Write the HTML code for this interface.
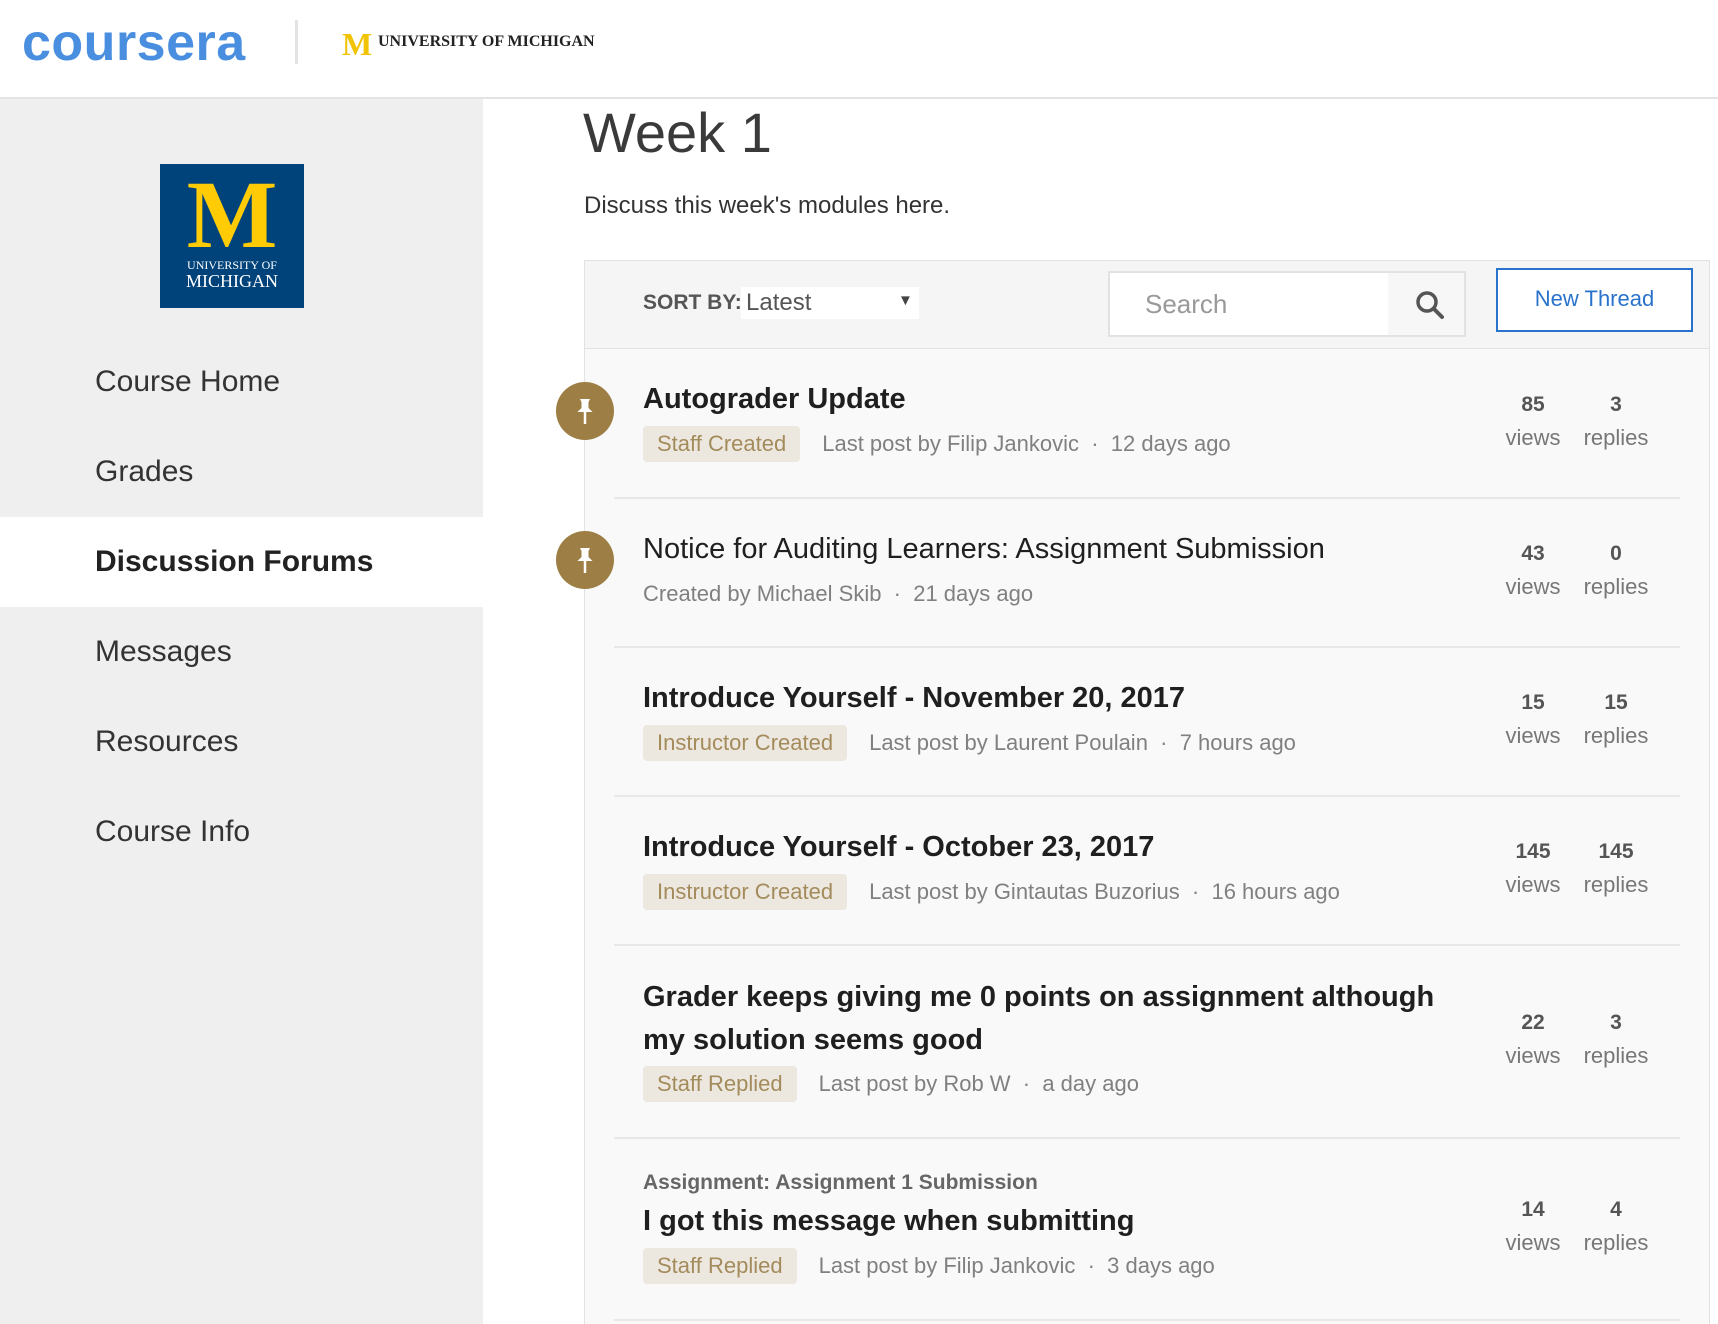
<!DOCTYPE html>
<html style="overflow:hidden;height:1324px"><head><meta charset="utf-8"><style>
*{margin:0;padding:0;box-sizing:border-box}
body{width:1718px;height:1324px;overflow:hidden;background:#fff;font-family:"Liberation Sans",sans-serif;position:relative;color:#1f1f1f}
.a{position:absolute;white-space:nowrap}
.hdr{position:absolute;left:0;top:0;width:1718px;height:99px;background:#fff;border-bottom:2px solid #e3e3e3}
.side{position:absolute;left:0;top:99px;width:483px;height:1225px;background:#efefef}
.nav{position:absolute;left:95px;font-size:30px;color:#333;line-height:40px}
.panel{position:absolute;left:584px;top:260px;width:1126px;height:1064px;background:#f9f9f9;border:1px solid #e2e2e2;border-bottom:none}
.tool{position:absolute;left:584px;top:260px;width:1126px;height:89px;background:#f5f5f5;border:1px solid #e2e2e2}
.sep{position:absolute;left:614px;width:1066px;height:2px;background:#e8e8e8}
.pin{position:absolute;width:58px;height:58px;border-radius:50%;background:#9d7e44}
.t{position:absolute;left:643px;font-size:29px;font-weight:bold;color:#1f1f1f}
.tn{font-weight:normal}
.m{position:absolute;left:643px;font-size:22px;color:#808080;line-height:36px}
.b{display:inline-block;background:#ede8df;color:#a48b5c;padding:0 14px;border-radius:4px;margin-right:22px;line-height:36px}
.st{position:absolute;text-align:center;width:90px;font-size:22px;color:#777;line-height:33px}
.st b{color:#555;font-size:21px}
</style></head><body>
<div class="hdr"></div>
<div class="a" style="left:22px;top:13px;font-size:52px;font-weight:bold;color:#4a8ee0;letter-spacing:0.5px">coursera</div>
<div class="a" style="left:295px;top:20px;width:3px;height:44px;background:#e3e3e3"></div>
<div class="a" style="left:342px;top:26px;font-size:32px;font-weight:900;color:#f2c300;font-family:'Liberation Serif',serif">M</div>
<div class="a" style="left:378px;top:33px;font-size:16px;color:#222;font-family:'Liberation Serif',serif;font-weight:bold">UNIVERSITY OF MICHIGAN</div>

<div class="side"></div>
<div class="a" style="left:160px;top:164px;width:144px;height:144px;background:#00427a"></div>
<div class="a" style="left:174px;top:160px;width:116px;text-align:center;font-size:96px;font-weight:900;color:#ffcb05;font-family:'Liberation Serif',serif;line-height:110px">M</div>
<div class="a" style="left:160px;top:258px;width:144px;text-align:center;font-size:12px;color:#fff;font-family:'Liberation Serif',serif">UNIVERSITY OF</div>
<div class="a" style="left:160px;top:271px;width:144px;text-align:center;font-size:18px;color:#fff;font-family:'Liberation Serif',serif">MICHIGAN</div>
<div class="a" style="left:0;top:517px;width:483px;height:90px;background:#fff"></div>
<div class="nav" style="top:362px">Course Home</div>
<div class="nav" style="top:452px">Grades</div>
<div class="nav" style="top:542px;font-weight:bold;color:#222">Discussion Forums</div>
<div class="nav" style="top:632px">Messages</div>
<div class="nav" style="top:722px">Resources</div>
<div class="nav" style="top:812px">Course Info</div>

<div class="a" style="left:583px;top:100px;font-size:56px;color:#3a3a3a">Week 1</div>
<div class="a" style="left:584px;top:192px;font-size:24px;color:#333">Discuss this week's modules here.</div>

<div class="panel"></div>
<div class="tool"></div>
<div class="a" style="left:643px;top:291px;font-size:21px;color:#555;font-weight:bold">SORT BY:</div>
<div class="a" style="left:741px;top:287px;width:178px;height:32px;background:#fff"></div>
<div class="a" style="left:746px;top:289px;font-size:24px;color:#555">Latest</div>
<div class="a" style="left:898px;top:292px;font-size:15px;color:#444">▼</div>
<div class="a" style="left:1108px;top:271px;width:358px;height:66px;background:#fff;border:2px solid #e2e2e2"></div>
<div class="a" style="left:1388px;top:273px;width:76px;height:62px;background:#f7f7f7"></div>
<div class="a" style="left:1145px;top:289px;font-size:26px;color:#999">Search</div>
<svg class="a" style="left:1415px;top:290px" width="30" height="30" viewBox="0 0 30 30"><circle cx="12" cy="12" r="9" fill="none" stroke="#555" stroke-width="3.5"/><path d="M19 19l8 8" stroke="#555" stroke-width="4" stroke-linecap="round"/></svg>
<div class="a" style="left:1496px;top:268px;width:197px;height:64px;border:2px solid #2a73cc;background:#fff"></div>
<div class="a" style="left:1496px;top:286px;width:197px;text-align:center;font-size:22px;color:#2a73cc">New Thread</div>

<div class="pin" style="left:556px;top:382px"></div>
<svg class="a" style="left:572px;top:397px" width="26" height="30" viewBox="0 0 26 30"><path d="M8 2h10l-1.5 3v6l4 4H5.5l4-4V5z" fill="#fff"/><path d="M13 15v12" stroke="#fff" stroke-width="2.5"/></svg>
<div class="t" style="top:383px">Autograder Update</div>
<div class="m" style="top:426px"><span class="b">Staff Created</span>Last post by Filip Jankovic &nbsp;·&nbsp; 12 days ago</div>
<div class="st" style="left:1488px;top:387px"><b>85</b><br>views</div>
<div class="st" style="left:1571px;top:387px"><b>3</b><br>replies</div>
<div class="sep" style="top:497px"></div>

<div class="pin" style="left:556px;top:531px"></div>
<svg class="a" style="left:572px;top:546px" width="26" height="30" viewBox="0 0 26 30"><path d="M8 2h10l-1.5 3v6l4 4H5.5l4-4V5z" fill="#fff"/><path d="M13 15v12" stroke="#fff" stroke-width="2.5"/></svg>
<div class="t tn" style="top:533px">Notice for Auditing Learners: Assignment Submission</div>
<div class="m" style="top:576px">Created by Michael Skib &nbsp;·&nbsp; 21 days ago</div>
<div class="st" style="left:1488px;top:536px"><b>43</b><br>views</div>
<div class="st" style="left:1571px;top:536px"><b>0</b><br>replies</div>
<div class="sep" style="top:646px"></div>

<div class="t" style="top:682px">Introduce Yourself - November 20, 2017</div>
<div class="m" style="top:725px"><span class="b">Instructor Created</span>Last post by Laurent Poulain &nbsp;·&nbsp; 7 hours ago</div>
<div class="st" style="left:1488px;top:685px"><b>15</b><br>views</div>
<div class="st" style="left:1571px;top:685px"><b>15</b><br>replies</div>
<div class="sep" style="top:795px"></div>

<div class="t" style="top:831px">Introduce Yourself - October 23, 2017</div>
<div class="m" style="top:874px"><span class="b">Instructor Created</span>Last post by Gintautas Buzorius &nbsp;·&nbsp; 16 hours ago</div>
<div class="st" style="left:1488px;top:834px"><b>145</b><br>views</div>
<div class="st" style="left:1571px;top:834px"><b>145</b><br>replies</div>
<div class="sep" style="top:944px"></div>

<div class="t" style="top:976px;line-height:43px">Grader keeps giving me 0 points on assignment although<br>my solution seems good</div>
<div class="m" style="top:1066px"><span class="b">Staff Replied</span>Last post by Rob W &nbsp;·&nbsp; a day ago</div>
<div class="st" style="left:1488px;top:1005px"><b>22</b><br>views</div>
<div class="st" style="left:1571px;top:1005px"><b>3</b><br>replies</div>
<div class="sep" style="top:1137px"></div>

<div class="m" style="top:1165px;font-weight:bold;color:#666;font-size:21px">Assignment: Assignment 1 Submission</div>
<div class="t" style="top:1205px">I got this message when submitting</div>
<div class="m" style="top:1248px"><span class="b">Staff Replied</span>Last post by Filip Jankovic &nbsp;·&nbsp; 3 days ago</div>
<div class="st" style="left:1488px;top:1192px"><b>14</b><br>views</div>
<div class="st" style="left:1571px;top:1192px"><b>4</b><br>replies</div>
<div class="sep" style="top:1319px"></div>
</body></html>
